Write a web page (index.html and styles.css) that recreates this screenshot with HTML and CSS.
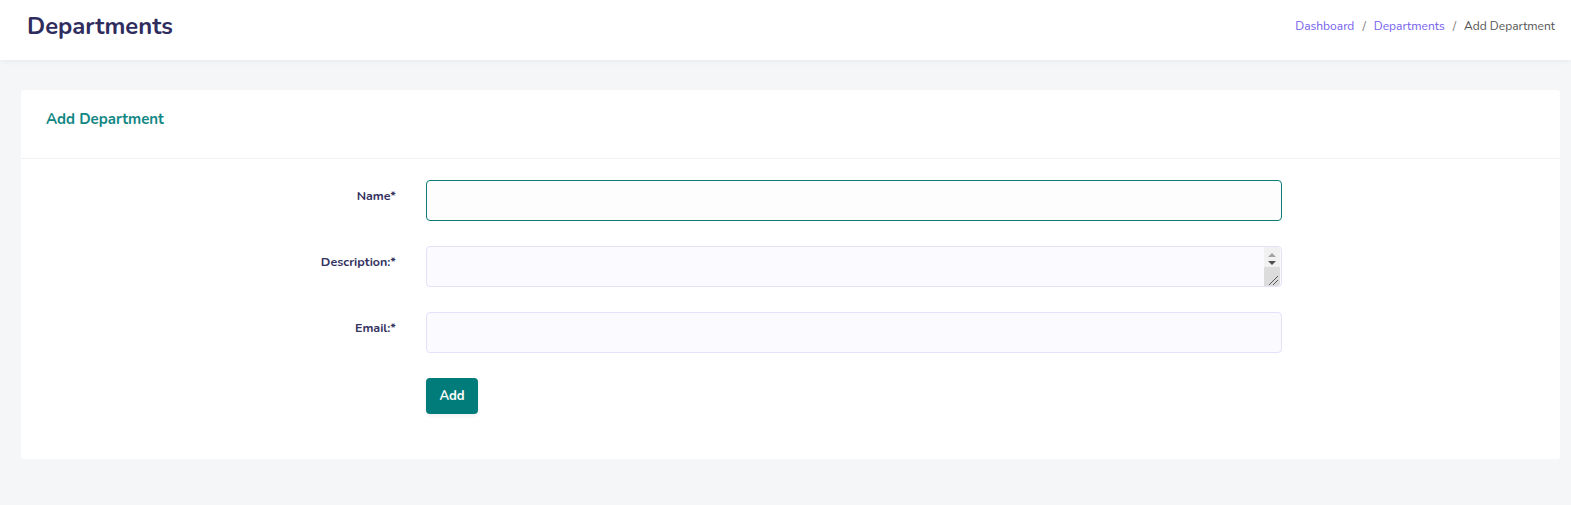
FILE: index.html
```html
<!DOCTYPE html>
<html lang="en">
<head>
<meta charset="utf-8">
<title>Departments</title>
<link rel="stylesheet" href="styles.css">
</head>
<body>
<header class="topbar">
  <h1 class="page-title">Departments</h1>
  <nav class="breadcrumb">
    <a href="#">Dashboard</a>
    <span class="sep">/</span>
    <a href="#">Departments</a>
    <span class="sep">/</span>
    <span class="current">Add Department</span>
  </nav>
</header>
<main class="content">
  <section class="card">
    <div class="card-header">
      <h2 class="card-title">Add Department</h2>
    </div>
    <form class="card-body form-grid">
      <label class="form-label" for="name">Name*</label>
      <input class="form-input focused" id="name" type="text">
      <label class="form-label" for="desc">Description:*</label>
      <div class="textarea-wrap">
        <textarea class="form-input textarea" id="desc" rows="1"></textarea>
        <span class="fake-scrollbar" aria-hidden="true">
          <span class="sb-buttons">
            <span class="sb-up"></span>
            <span class="sb-down"></span>
          </span>
          <span class="sb-corner">
            <svg width="17" height="19" viewBox="0 0 17 19">
              <line x1="15" y1="9" x2="6" y2="18" stroke="#555" stroke-width="1"/>
              <line x1="15" y1="13" x2="10" y2="18" stroke="#555" stroke-width="1"/>
            </svg>
          </span>
        </span>
      </div>
      <label class="form-label" for="email">Email:*</label>
      <input class="form-input" id="email" type="email">
      <span></span>
      <div><button type="button" class="btn">Add</button></div>
    </form>
  </section>
</main>
</body>
</html>
```
FILE: styles.css
```css
* { box-sizing: border-box; }
html, body { margin: 0; padding: 0; }
body {
  background: #f5f6f8;
  font-family: "Nunito", "Lato", "Noto Sans", sans-serif;
  color: #333;
  height: 505px;
  overflow: hidden;
}
.topbar {
  height: 60px;
  background: #fff;
  display: flex;
  align-items: center;
  justify-content: space-between;
  padding: 0 16px 0 27px;
  box-shadow: 0 1px 6px rgba(0, 0, 0, 0.06);
  position: relative;
}
.page-title {
  margin: 0;
  font-size: 23.8px;
  font-weight: 700;
  color: #2f2c5e;
  padding-bottom: 9px;
}
.breadcrumb {
  font-size: 12px;
  padding-bottom: 9px;
  display: flex;
  gap: 8px;
}
.breadcrumb a { color: #7460ee; text-decoration: none; }
.breadcrumb .sep { color: #777; }
.breadcrumb .current { color: #555; }
.content {
  padding: 30px 11px 0 21px;
}
.card {
  background: #fff;
  border-radius: 3px;
}
.card-header {
  height: 69px;
  border-bottom: 1px solid #f2f2f4;
  display: flex;
  align-items: center;
  padding: 0 25px;
}
.card-title {
  margin: 0;
  font-size: 15px;
  font-weight: 700;
  color: #128784;
  padding-bottom: 10px;
}
.form-grid {
  display: grid;
  grid-template-columns: 375px 856px;
  column-gap: 30px;
  row-gap: 25px;
  padding: 21px 0 45px;
}
.form-label {
  text-align: right;
  font-size: 12.5px;
  font-weight: 700;
  color: #35335f;
  padding-top: 7px;
}
.form-input {
  height: 41px;
  width: 856px;
  border: 1px solid #e4e1fb;
  background: #fbfbff;
  border-radius: 4px;
  font: inherit;
  padding: 8px 12px;
  outline: none;
  display: block;
}
.form-input.focused {
  border-color: #0a7c75;
  background: #fdfdfd;
}
.textarea-wrap {
  position: relative;
  width: 856px;
  height: 41px;
}
.textarea {
  resize: none;
  overflow: hidden;
}
.fake-scrollbar {
  position: absolute;
  top: 1px;
  right: 2px;
  bottom: 1px;
  width: 16px;
  display: flex;
  flex-direction: column;
  pointer-events: none;
}
.sb-buttons {
  height: 20px;
  background: #f1f1f1;
  display: flex;
  flex-direction: column;
  align-items: center;
  padding-top: 6px;
  gap: 4px;
}
.sb-up {
  width: 0;
  height: 0;
  border-left: 4px solid transparent;
  border-right: 4px solid transparent;
  border-bottom: 4px solid #a3a3a3;
}
.sb-down {
  width: 0;
  height: 0;
  border-left: 4px solid transparent;
  border-right: 4px solid transparent;
  border-top: 4px solid #505050;
}
.sb-corner {
  flex: 1;
  background: #dcdcdc;
  position: relative;
  overflow: hidden;
  border-bottom-right-radius: 3px;
}
.sb-corner svg {
  position: absolute;
  right: 0;
  bottom: 0;
}
.btn {
  background: #027c7a;
  color: #fff;
  border: none;
  border-radius: 4px;
  width: 52px;
  height: 36px;
  font: inherit;
  font-size: 13px;
  font-weight: 700;
  box-shadow: 0 2px 4px rgba(0, 0, 0, 0.06);
  display: block;
}
```
